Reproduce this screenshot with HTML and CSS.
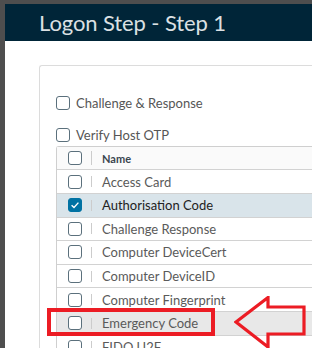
FILE: index.html
```html
<!DOCTYPE html>
<html lang="en">
<head>
  <meta charset="UTF-8">
  <title>Logon Step - Step 1</title>
  <link rel="stylesheet" href="styles.css">
</head>
<body>

<div class="backdrop">
  <div class="modal">
    <div class="modal-header">
      <h3 class="modal-title">Logon Step - Step 1</h3>
    </div>
    <div class="modal-body">
      <div class="card">
        <label class="option"><span class="box"></span>Challenge &amp; Response</label>
        <label class="option"><span class="box"></span>Verify Host OTP</label>

        <div class="grid">
          <div class="grid-row grid-head">
            <span class="cell-check"><span class="box"></span></span>
            <span class="sep"></span>
            <span class="cell-name">Name</span>
          </div>
          <div class="grid-row">
            <span class="cell-check"><span class="box"></span></span>
            <span class="sep"></span>
            <span class="cell-name">Access Card</span>
          </div>
          <div class="grid-row selected">
            <span class="cell-check"><span class="box checked">
              <svg viewBox="0 0 14 14" width="14" height="14"><path d="M3.6 7.2 L6 9.4 L10.4 4.6" fill="none" stroke="#fff" stroke-width="1.4"/></svg>
            </span></span>
            <span class="sep"></span>
            <span class="cell-name">Authorisation Code</span>
          </div>
          <div class="grid-row">
            <span class="cell-check"><span class="box"></span></span>
            <span class="sep"></span>
            <span class="cell-name">Challenge Response</span>
          </div>
          <div class="grid-row">
            <span class="cell-check"><span class="box"></span></span>
            <span class="sep"></span>
            <span class="cell-name">Computer DeviceCert</span>
          </div>
          <div class="grid-row">
            <span class="cell-check"><span class="box"></span></span>
            <span class="sep"></span>
            <span class="cell-name">Computer DeviceID</span>
          </div>
          <div class="grid-row">
            <span class="cell-check"><span class="box"></span></span>
            <span class="sep"></span>
            <span class="cell-name">Computer Fingerprint</span>
          </div>
          <div class="grid-row hover">
            <span class="cell-check"><span class="box"></span></span>
            <span class="sep"></span>
            <span class="cell-name">Emergency Code</span>
          </div>
          <div class="grid-row">
            <span class="cell-check"><span class="box"></span></span>
            <span class="sep"></span>
            <span class="cell-name">FIDO U2F</span>
          </div>
        </div>
      </div>
    </div>
  </div>
</div>

<!-- annotation drawn over the screenshot -->
<div class="mark-box"></div>
<svg class="mark-arrow" width="80" height="60" viewBox="0 0 80 60">
  <path d="M2 26 L34 1.5 L34 11 L70 11 L70 38 L34 38 L34 51 Z" fill="none" stroke="#ec1c24" stroke-width="3.2" stroke-linejoin="miter"/>
</svg>

</body>
</html>
```

FILE: styles.css
```css
body {
  margin: 0;
  width: 312px;
  height: 348px;
  overflow: hidden;
  background-color: #4e4e4e;
  font-family: "Lato", "Open Sans", sans-serif;
  position: relative;
}
.backdrop {
  padding: 4px 0 0 5px;
  height: 100%;
  box-sizing: border-box;
}
.modal {
  background-color: #fff;
  height: 100%;
  overflow: hidden;
}
.modal-header {
  height: 37px;
  background-color: #002538;
  padding-left: 34px;
  display: flex;
  align-items: center;
}
.modal-title {
  margin: 0;
  font-size: 22px;
  font-weight: 400;
  color: #dbe0e3;
  letter-spacing: -0.1px;
}
.modal-body {
  padding: 24px 0 0 34px;
}
.card {
  border: 1px solid #dcdcdc;
  border-right: 0;
  border-radius: 3px 0 0 0;
  padding: 30px 0 0 16px;
  height: 400px;
  display: flex;
  flex-direction: column;
}
.option {
  display: flex;
  align-items: center;
  height: 14px;
  margin-bottom: 18px;
  font-size: 13px;
  color: #565656;
}
.option:nth-child(2) {
  margin-bottom: 4px;
}
.option .box {
  margin-right: 6px;
}
.box {
  display: inline-flex;
  width: 14px;
  height: 14px;
  box-sizing: border-box;
  border: 1px solid #5b707c;
  border-radius: 3px;
  background-color: #fff;
  flex-shrink: 0;
}
.box.checked {
  background-color: #0072a3;
  border-color: #0072a3;
}
.box.checked svg {
  margin: -1px;
}
.grid {
  border: 1px solid #cfcfcf;
  border-right: 0;
  border-radius: 3px 0 0 0;
}
.grid-row {
  display: flex;
  align-items: center;
  height: 23.6px;
  box-sizing: border-box;
  border-bottom: 1px solid #d2d2d2;
  font-size: 13px;
  color: #5a5a5a;
}
.grid-head {
  height: 23.4px;
  background-color: #fafafa;
  font-size: 11px;
  font-weight: 700;
  color: #3a4650;
}
.grid-head .sep {
  height: 14px;
}
.grid-row.selected {
  background-color: #d9e4ea;
  color: #222;
}
.grid-row.hover {
  background-color: #e8e8e8;
}
.cell-check {
  display: flex;
  padding-left: 11px;
  width: 14px;
}
.sep {
  width: 1px;
  height: 11px;
  background-color: #ccc;
  margin-left: 9px;
  margin-right: 10px;
}
.cell-name {
  white-space: nowrap;
}
.mark-box {
  position: absolute;
  left: 47px;
  top: 308px;
  width: 168px;
  height: 28px;
  box-sizing: border-box;
  border: 4.5px solid #ec1c24;
}
.mark-arrow {
  position: absolute;
  left: 234px;
  top: 296px;
}
```
